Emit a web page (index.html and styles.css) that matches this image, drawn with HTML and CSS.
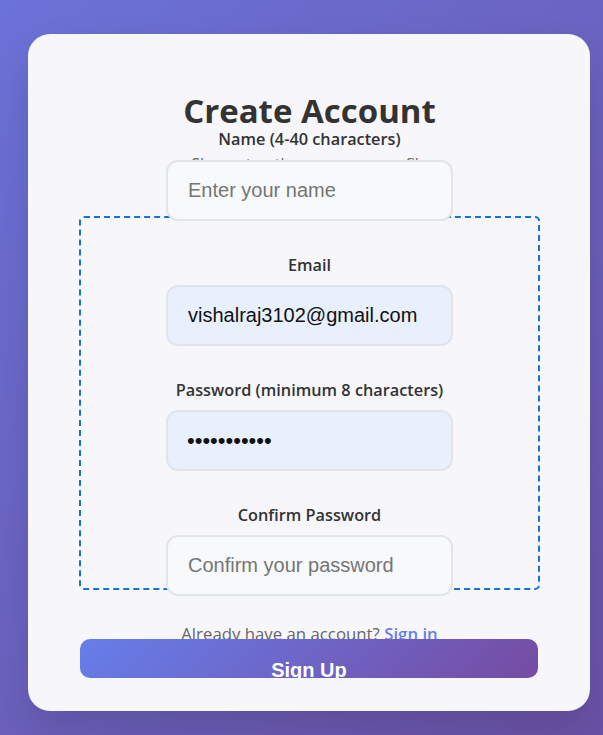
FILE: index.html
```html
<!DOCTYPE html>
<html lang="en">
<head>
<meta charset="utf-8">
<title>Create Account</title>
<link rel="stylesheet" href="styles.css">
</head>
<body>
  <div class="card">
    <h1 class="title">Create Account</h1>
    <form class="form" onsubmit="return false">
      <label class="label" for="name">Name (4-40 characters)</label>
      <p class="hint">Shown to others on your profile</p>
      <input class="input input-name" id="name" type="text" placeholder="Enter your name">
      <div class="debug-box">
        <div class="field">
          <label class="label" for="email">Email</label>
          <input class="input input-filled" id="email" type="email" value="vishalraj3102@gmail.com">
        </div>
        <div class="field">
          <label class="label" for="password">Password (minimum 8 characters)</label>
          <input class="input input-filled input-secret" id="password" type="password" value="abcdefghijk">
        </div>
        <div class="field">
          <label class="label" for="confirm">Confirm Password</label>
          <input class="input" id="confirm" type="password" placeholder="Confirm your password">
        </div>
      </div>
      <p class="switch">Already have an account? <a class="switch-link" href="#">Sign in</a></p>
      <button class="submit" type="submit"><span>Sign Up</span></button>
    </form>
  </div>
</body>
</html>
```
FILE: styles.css
```css
* {
  box-sizing: border-box;
}

html, body {
  margin: 0;
  height: 100%;
}

body {
  background: linear-gradient(135deg, #6b72d8 0%, #6a52a6 100%);
  padding: 34px 13px 0 28px;
  font-family: "Open Sans", "Noto Sans", sans-serif;
  overflow: hidden;
}

.card {
  height: 677px;
  background: #f7f7fb;
  border-radius: 22px;
  padding: 59px 50px 0 51px;
  box-shadow: 0 20px 40px rgba(0, 0, 0, 0.12);
}

.title {
  margin: 0;
  font-size: 33px;
  line-height: 36px;
  font-weight: 700;
  color: #333;
  text-align: center;
}

.form {
  display: block;
}

.label {
  display: block;
  font-size: 16.3px;
  line-height: 20px;
  font-weight: 600;
  color: #333;
  text-align: center;
  margin-bottom: 10px;
}

.hint {
  margin: -5px 0 0;
  font-size: 16px;
  line-height: 20px;
  color: #666;
  text-align: center;
}

.input {
  position: relative;
  display: block;
  width: 287px;
  height: 61px;
  margin: 0 auto;
  padding: 0 20px;
  border: 2px solid #e1e5e9;
  border-radius: 12px;
  background: #f8f9fa;
  font-family: "Liberation Sans", Arial, sans-serif;
  font-size: 20px;
  color: #111;
  outline: none;
}

.input::placeholder {
  color: #757575;
}

.input-name {
  margin-top: -14px;
}

.input-filled {
  background: #e8f0fe;
}

.input-secret {
  font-size: 22px;
  padding-left: 19px;
}

.debug-box {
  height: 374px;
  margin-top: -5px;
  padding-top: 37px;
  border: 2px dashed #1474d4;
  border-radius: 5px;
}

.field + .field {
  margin-top: 34px;
}

.switch {
  margin: 34px 0 0;
  font-size: 16.8px;
  line-height: 20px;
  color: #666;
  text-align: center;
}

.switch-link {
  color: #667eea;
  font-weight: 600;
  text-decoration: none;
}

.submit {
  position: relative;
  display: flex;
  align-items: flex-start;
  justify-content: center;
  width: 458px;
  height: 39px;
  margin: -5px 0 0 1px;
  padding: 20px 0 0;
  border: none;
  border-radius: 10px;
  overflow: hidden;
  background: linear-gradient(135deg, #667eea 0%, #764ba2 100%);
  color: #fff;
  font-family: "Liberation Sans", Arial, sans-serif;
  font-size: 20px;
  line-height: 23px;
  font-weight: 700;
  cursor: pointer;
}
```
